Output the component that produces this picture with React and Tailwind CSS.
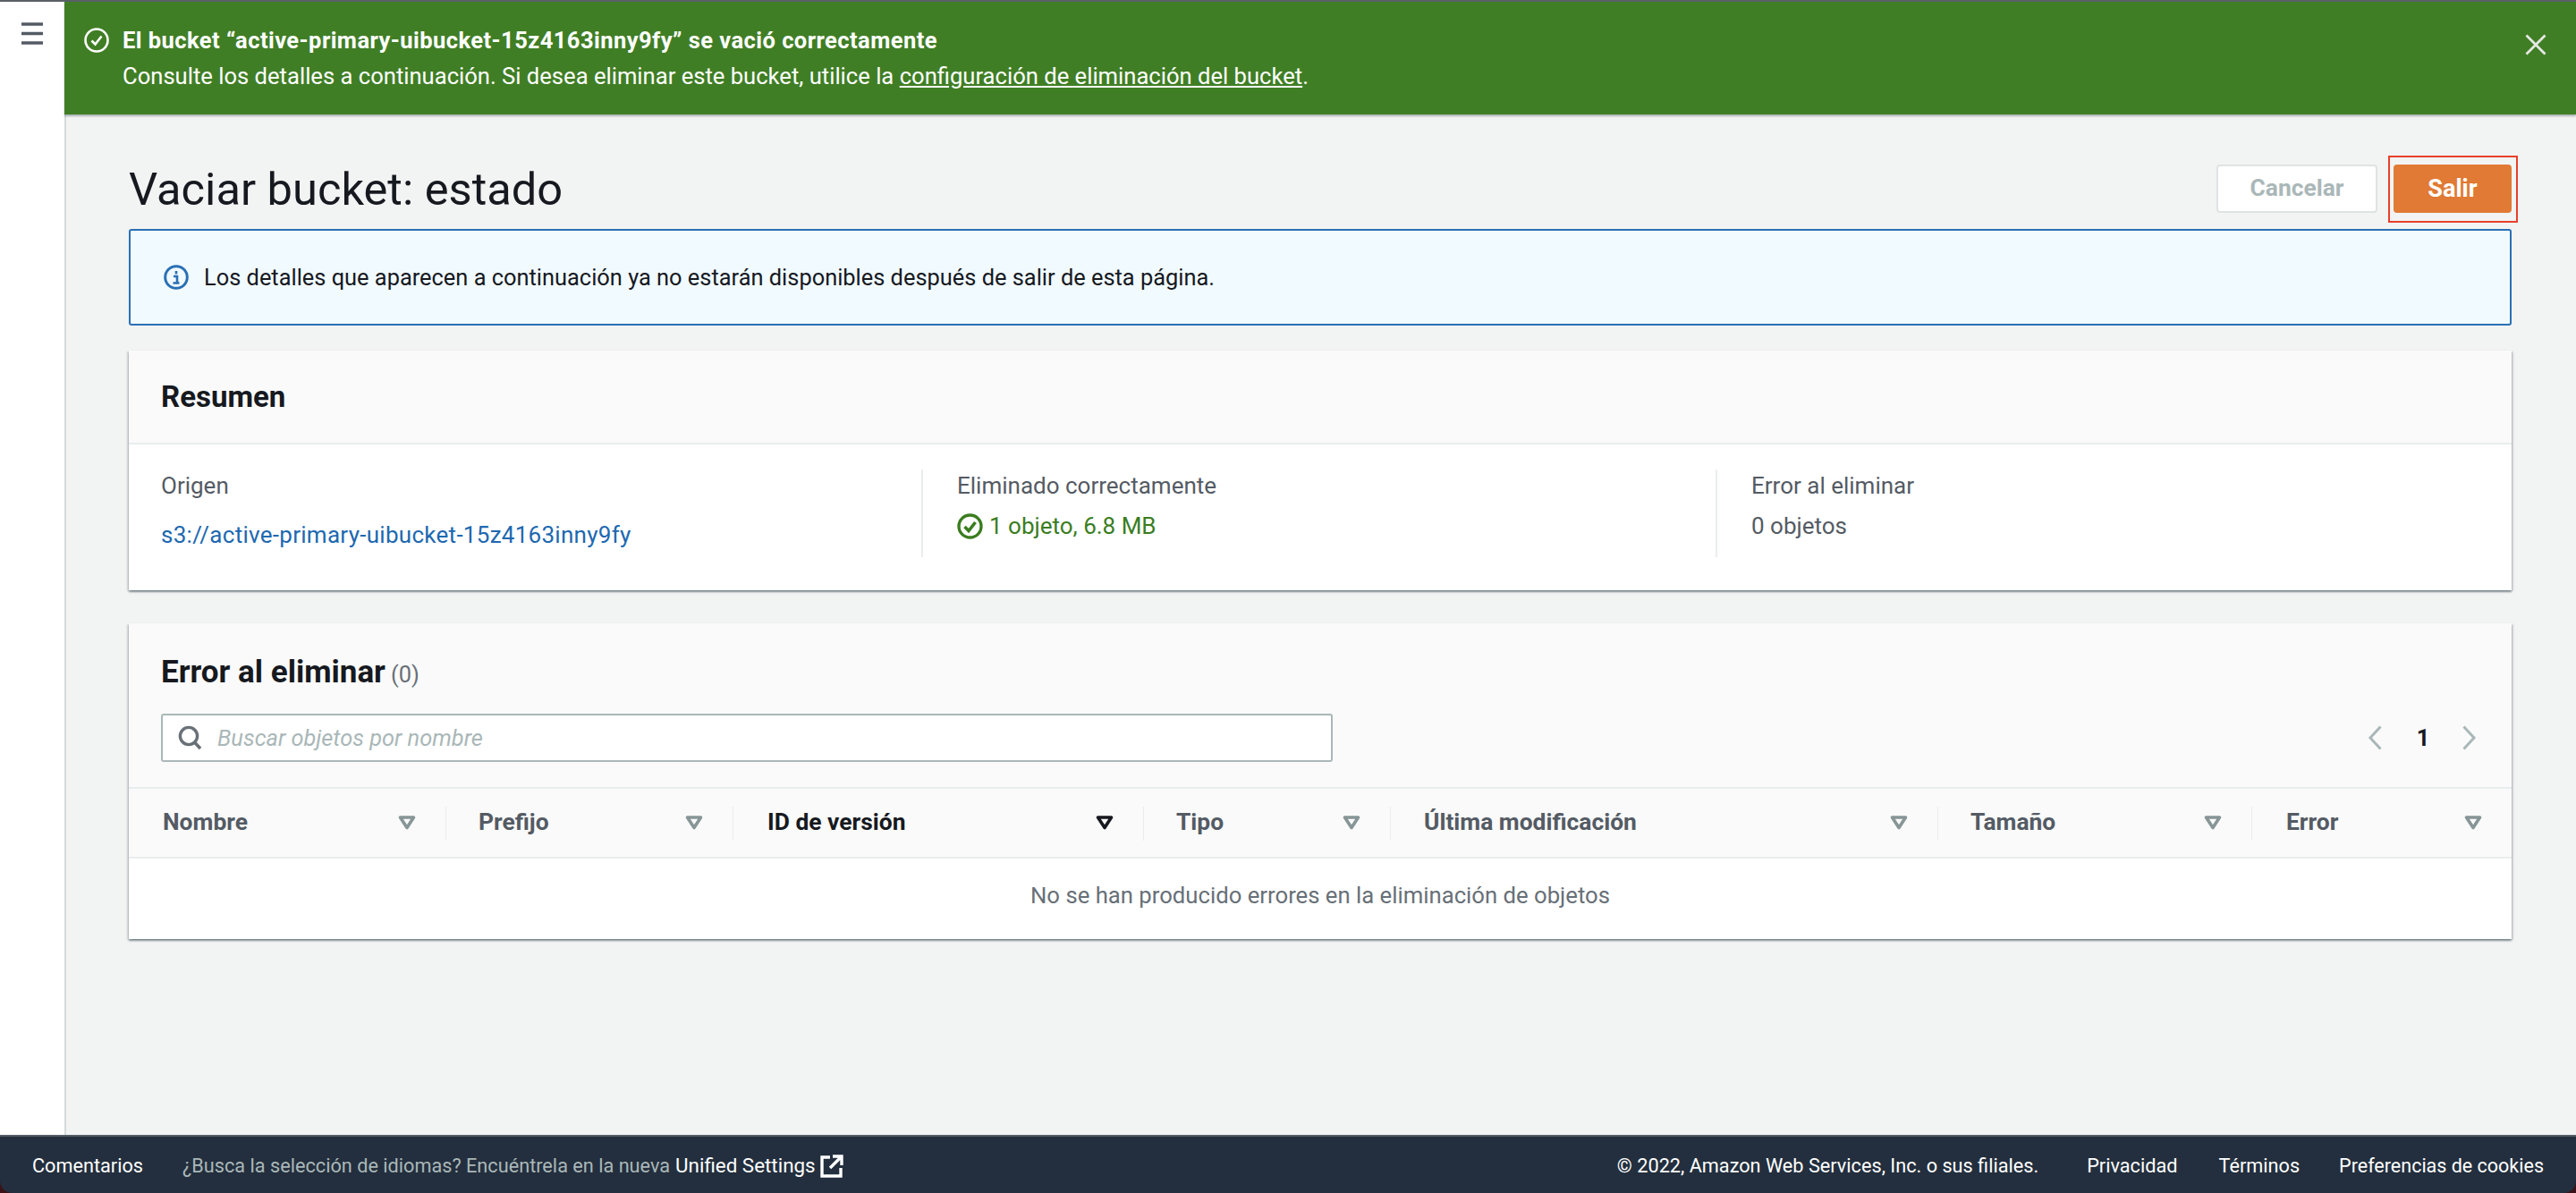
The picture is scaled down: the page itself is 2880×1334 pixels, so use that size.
import React from "react";

const font = "font-['Roboto',sans-serif]";

function Filter({ dark }) {
  return (
    <svg width="20" height="16" viewBox="0 0 20 16" className="shrink-0">
      <path d="M2.5 2H17.5L10 13.5Z" fill="none" stroke={dark ? "#16191f" : "#879596"} strokeWidth="3.6" strokeLinejoin="round" />
    </svg>
  );
}

function Th({ label, width, pl = "pl-[36px]", active, last }) {
  return (
    <div className={`relative flex h-full items-center justify-between ${pl} ${width} ${last ? "pr-[33px]" : "pr-[34px]"}`}>
      <span className={`text-[26.4px] font-bold ${active ? "text-[#16191f]" : "text-[#545b64]"}`}>{label}</span>
      <Filter dark={active} />
      {!last && <span className="absolute right-0 top-[20px] h-[38px] w-px bg-[#eaeded]" />}
    </div>
  );
}

export default function App() {
  return (
    <div className={`flex h-[1334px] w-[2880px] flex-col overflow-hidden bg-[#3a1218] ${font} text-[25.4px] text-[#16191f]`}>
      <div className="flex min-h-0 flex-1 border-t-2 border-[#5a6068] bg-white">
        <div className="w-[72px] shrink-0 bg-white pl-[24px] pt-[22px]">
          <svg width="24" height="26" viewBox="0 0 24 26">
            <path d="M0 3H24M0 13.5H24M0 24H24" stroke="#545b64" strokeWidth="3.6" />
          </svg>
        </div>
        <div className="flex min-w-0 flex-1 flex-col bg-[#f2f3f3]">
          <div className="z-10 flex h-[126px] shrink-0 items-start justify-between bg-[#407e25] pl-[22px] pr-[33px] text-white shadow-[0_2px_2px_rgba(0,28,36,0.3)]">
            <div className="flex gap-[15px] pt-[29px]">
              <svg width="28" height="28" viewBox="0 0 28 28">
                <circle cx="14" cy="14" r="12.5" fill="none" stroke="white" strokeWidth="2.6" />
                <path d="M8.5 14.5L12.5 18.5L19.5 9.5" fill="none" stroke="white" strokeWidth="2.6" />
              </svg>
              <div className="flex flex-col gap-[12px]">
                <div className="text-[25.5px] font-bold leading-[28px] tracking-[0.45px]">El bucket “active-primary-uibucket-15z4163inny9fy” se vació correctamente</div>
                <div className="text-[25.6px] leading-[28px]">
                  Consulte los detalles a continuación. Si desea eliminar este bucket, utilice la{" "}
                  <a className="underline">configuración de eliminación del bucket</a>.
                </div>
              </div>
            </div>
            <svg width="24" height="24" viewBox="0 0 24 24" className="mt-[36px]">
              <path d="M1.5 1.5L22.5 22.5M22.5 1.5L1.5 22.5" stroke="#e6e9e4" strokeWidth="2.8" />
            </svg>
          </div>

          <div className="flex flex-1 flex-col border-l-2 border-[#d5dbdb] pl-[70px] pr-[72px]">
            <div className="flex h-[128px] items-start justify-between pt-[56px]">
              <h1 className="mt-[-2px] text-[50.6px] font-normal leading-[60px]">Vaciar bucket: estado</h1>
              <div className="flex gap-[18px]">
                <button className="h-[54px] w-[180px] rounded-[4px] border-2 border-[#dfe3e3] bg-white text-[26.4px] font-bold text-[#aab7b8]">Cancelar</button>
                <div className="relative">
                  <button className="h-[54px] w-[132px] rounded-[4px] bg-[#e07a34] text-[27px] font-bold text-white">Salir</button>
                  <span className="absolute bottom-[-11px] left-[-6px] right-[-7px] top-[-10px] border-2 border-[#e8402a]" />
                </div>
              </div>
            </div>

            <div className="flex h-[108px] items-center gap-[18px] rounded-[3px] border-2 border-[#2a70b5] bg-[#f1faff] pl-[37px]">
              <svg width="28" height="28" viewBox="0 0 28 28">
                <circle cx="14" cy="14" r="12.3" fill="none" stroke="#2a70b5" strokeWidth="3" />
                <path d="M14 7V10.5M11 13H15V20M10.5 20.5H17.5" fill="none" stroke="#2a70b5" strokeWidth="2.6" />
              </svg>
              <span className="ml-[-1px]">Los detalles que aparecen a continuación ya no estarán disponibles después de salir de esta página.</span>
            </div>

            <section className="mt-[28px] h-[268px] bg-white shadow-[0_2px_2px_rgba(0,28,36,0.4),2px_1px_2px_rgba(0,28,36,0.12),-2px_1px_2px_rgba(0,28,36,0.12)]">
              <div className="flex h-[105px] items-center border-b-2 border-[#eaeded] bg-[#fafafa] pl-[36px]">
                <h2 className="text-[33px] font-bold">Resumen</h2>
              </div>
              <div className="grid grid-cols-[888px_888px_1fr] pt-[28px] text-[26px]">
                <div className="flex h-[98px] flex-col border-r-2 border-[#eaeded] pl-[36px]">
                  <span className="leading-[36px] text-[#545b64]">Origen</span>
                  <a className="mt-[19px] leading-[36px] tracking-[0.28px] text-[#2068b0]">s3://active-primary-uibucket-15z4163inny9fy</a>
                </div>
                <div className="flex h-[98px] flex-col border-r-2 border-[#eaeded] pl-[38px]">
                  <span className="leading-[36px] text-[#545b64]">Eliminado correctamente</span>
                  <span className="mt-[9px] flex items-center gap-[7px] leading-[36px] text-[#3a7d1f]">
                    <svg width="29" height="29" viewBox="0 0 29 29">
                      <circle cx="14.5" cy="14.5" r="12.5" fill="none" stroke="#3a7d1f" strokeWidth="3.4" />
                      <path d="M8.5 15L13 19.5L20.5 10" fill="none" stroke="#3a7d1f" strokeWidth="3.6" />
                    </svg>
                    1 objeto, 6.8 MB
                  </span>
                </div>
                <div className="flex h-[98px] flex-col pl-[38px]">
                  <span className="leading-[36px] text-[#545b64]">Error al eliminar</span>
                  <span className="mt-[9px] leading-[36px] text-[#545b64]">0 objetos</span>
                </div>
              </div>
            </section>

            <section className="mt-[37px] h-[353px] bg-white shadow-[0_2px_2px_rgba(0,28,36,0.4),2px_1px_2px_rgba(0,28,36,0.12),-2px_1px_2px_rgba(0,28,36,0.12)]">
              <div className="h-[185px] border-b-2 border-[#eaeded] bg-[#fafafa] px-[36px]">
                <div className="flex h-[101px] items-center pt-[10px]">
                  <h2 className="text-[35px] font-bold">Error al eliminar</h2>
                  <span className="ml-[6px] mt-[4px] text-[25.4px] text-[#687078]">(0)</span>
                </div>
                <div className="flex items-center justify-between">
                  <div className="relative h-[54px] w-[1310px]">
                    <svg width="30" height="28" viewBox="0 0 30 28" className="absolute left-[18px] top-[13px]">
                      <circle cx="13" cy="12" r="9.6" fill="none" stroke="#687078" strokeWidth="3.4" />
                      <path d="M19.5 19L26 26" stroke="#687078" strokeWidth="3.6" />
                    </svg>
                    <input
                      readOnly
                      placeholder="Buscar objetos por nombre"
                      className="h-full w-full rounded-[3px] border-2 border-[#aab7b8] bg-white pl-[61px] text-[25.4px] placeholder:italic placeholder:text-[#aab7b8]"
                    />
                  </div>
                  <div className="flex items-center pr-[2px]">
                    <svg width="18" height="28" viewBox="0 0 18 28">
                      <path d="M15.5 1.5L4 14L15.5 26.5" fill="none" stroke="#aab7b8" strokeWidth="3" />
                    </svg>
                    <span className="ml-[35px] mr-[33px] w-[20px] text-center font-bold">1</span>
                    <svg width="18" height="28" viewBox="0 0 18 28">
                      <path d="M2.5 1.5L14 14L2.5 26.5" fill="none" stroke="#aab7b8" strokeWidth="3" />
                    </svg>
                  </div>
                </div>
              </div>
              <div className="flex h-[78px] border-b-2 border-[#eaeded] bg-[#fafafa]">
                <Th label="Nombre" width="w-[355px]" pl="pl-[38px]" />
                <Th label="Prefijo" width="w-[321px]" />
                <Th label="ID de versión" width="w-[459px]" pl="pl-[38px]" active />
                <Th label="Tipo" width="w-[276px]" />
                <Th label="Última modificación" width="w-[612px]" pl="pl-[37px]" />
                <Th label="Tamaño" width="w-[351px]" />
                <Th label="Error" width="w-[290px]" pl="pl-[38px]" last />
              </div>
              <div className="flex h-[90px] items-center justify-center pb-[8px] text-[25.7px] text-[#687078]">
                No se han producido errores en la eliminación de objetos
              </div>
            </section>
          </div>
        </div>
      </div>

      <footer className="flex h-[65px] shrink-0 items-center justify-between rounded-b-[14px] border-t-2 border-[#545b64] bg-[#232f3e] pl-[36px] pr-[36px] pt-[3px] text-[21.7px] text-white">
        <div className="flex items-center">
          <span>Comentarios</span>
          <span className="ml-[44px] text-[#aab7b8]">¿Busca la selección de idiomas? Encuéntrela en la nueva</span>
          <span className="ml-[6px] text-[22.4px]">Unified Settings</span>
          <svg width="26" height="26" viewBox="0 0 26 26" className="ml-[5px]">
            <path d="M11 3H2V24H23V15M14 2H24V12M24 2L11 15" fill="none" stroke="white" strokeWidth="3.4" />
          </svg>
        </div>
        <div className="flex items-center">
          <span>© 2022, Amazon Web Services, Inc. o sus filiales.</span>
          <span className="ml-[54px]">Privacidad</span>
          <span className="ml-[46px]">Términos</span>
          <span className="ml-[44px] text-[21.5px]">Preferencias de cookies</span>
        </div>
      </footer>
    </div>
  );
}
